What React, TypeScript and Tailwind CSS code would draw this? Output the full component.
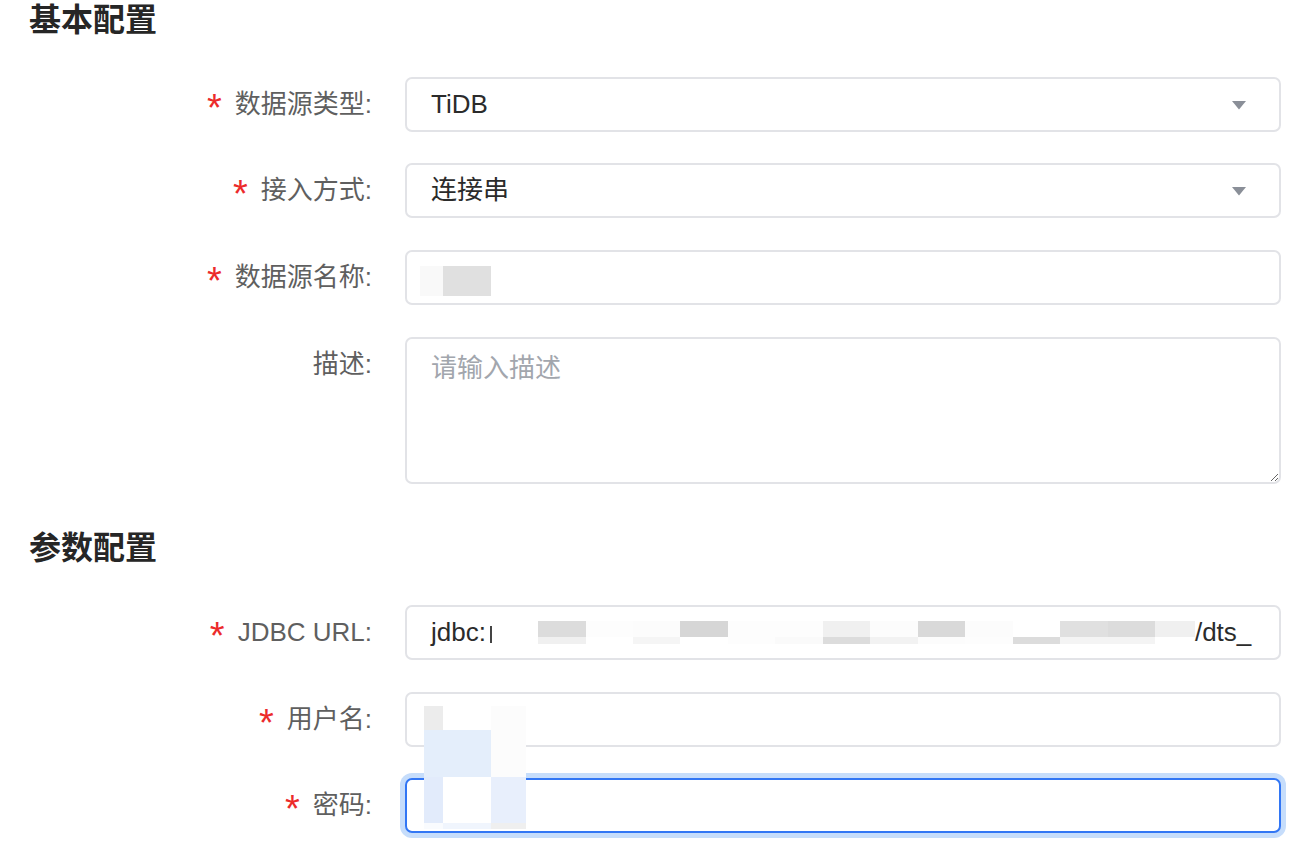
const FONT = "font-['Liberation_Sans','Noto_Sans_CJK_SC',sans-serif]"

function Label({ text, required }: { text: string; required?: boolean }) {
  return (
    <div className="flex h-[55px] w-[405px] shrink-0 items-center justify-end pr-[33px] text-[26px] text-[#5f5f5f]">
      {required && (
        <span className="mr-[13px] inline-block translate-y-[3px] text-[38px] leading-none text-[#ec2b2b]">*</span>
      )}
      <span>{text}:</span>
    </div>
  )
}

function Caret() {
  return (
    <svg width="16" height="10" viewBox="0 0 16 10" className="shrink-0">
      <path d="M1 1 H15 L8 9.5 Z" fill="#8a8f98" />
    </svg>
  )
}

function Box({
  children,
  focused,
  className = '',
}: {
  children?: React.ReactNode
  focused?: boolean
  className?: string
}) {
  return (
    <div
      className={
        'flex h-[55px] w-[876px] items-center overflow-hidden rounded-[7px] border-2 bg-white ' +
        (focused ? 'border-[#3276f4] shadow-[0_0_0_5px_#c6ddfb] ' : 'border-[#e2e3e7] ') +
        className
      }
    >
      {children}
    </div>
  )
}

function SelectBox({ value }: { value: string }) {
  return (
    <Box className="justify-between pl-[24px] pr-[32px]">
      <span className="text-[26px] text-[#2b2b2b]">{value}</span>
      <Caret />
    </Box>
  )
}

// pixelated cells covering the url: [width, top colour, bottom colour]
const urlCells: [number, string, string][] = [
  [45, '#ffffff', '#ffffff'],
  [48, '#dcdcdc', '#f0f0f0'],
  [47, '#fdfdfd', '#ffffff'],
  [47, '#fcfcfc', '#f5f5f5'],
  [48, '#d6d6d6', '#ffffff'],
  [47, '#fdfdfd', '#fdfdfd'],
  [48, '#fdfdfd', '#fafafa'],
  [47, '#f0f0f0', '#dcdcdc'],
  [48, '#fcfcfc', '#f2f2f2'],
  [47, '#d9d9d9', '#fcfcfc'],
  [48, '#fcfcfc', '#fdfdfd'],
  [47, '#ffffff', '#dcdcdc'],
  [48, '#e0e0e0', '#f4f4f4'],
  [47, '#dcdcdc', '#f4f4f4'],
  [40, '#f0f0f0', '#ffffff'],
]

const accountCols = ['w-[19px]', 'w-[48px]', 'w-[35px]']
const accountRows: { h: string; colors: string[] }[] = [
  { h: 'h-[24px]', colors: ['bg-[#ececec]', 'bg-transparent', 'bg-[#fcfcfc]'] },
  { h: 'h-[47px]', colors: ['bg-[#e4eefb]', 'bg-[#e4eefb]', 'bg-[#fcfcfc]'] },
  { h: 'h-[46px]', colors: ['bg-[#e2ebfb]', 'bg-[#ffffff]', 'bg-[#e8effc]'] },
  { h: 'h-[6px]', colors: ['bg-[#f9fbfe]', 'bg-[#f0f5fd]', 'bg-[#efefef]'] },
]

export default function App() {
  return (
    <div className={`h-[852px] w-[1308px] overflow-hidden bg-white ${FONT}`}>
      <h2 className="pl-[29px] text-[32px] leading-[40px] font-semibold text-[#262626]">基本配置</h2>

      <div className="mt-[37px] flex">
        <Label text="数据源类型" required />
        <SelectBox value="TiDB" />
      </div>

      <div className="mt-[31px] flex">
        <Label text="接入方式" required />
        <SelectBox value="连接串" />
      </div>

      <div className="mt-[32px] flex">
        <Label text="数据源名称" required />
        <Box className="items-start pt-[14px] pl-[13px]">
          <div className="h-[30px] w-[23px] bg-[#f9f9f9]" />
          <div className="h-[30px] w-[48px] bg-[#e0e0e0]" />
        </Box>
      </div>

      <div className="mt-[32px] flex">
        <Label text="描述" />
        <textarea
          placeholder="请输入描述"
          className="h-[147px] w-[876px] rounded-[7px] border-2 border-[#e2e3e7] bg-white px-[24px] pt-[11px] text-[26px] leading-[36px] text-[#2b2b2b] outline-none placeholder:text-[#a2a6ad]"
        />
      </div>

      <h2 className="mt-[44px] pl-[29px] text-[32px] leading-[40px] font-semibold text-[#262626]">参数配置</h2>

      <div className="mt-[37px] flex">
        <Label text="JDBC URL" required />
        <Box className="pl-[24px]">
          <span className="text-[26px] text-[#2b2b2b]">jdbc:</span>
          <span className="ml-[4px] h-[17px] w-[2px] translate-y-[2px] bg-[#444]" />
          <div className="ml-[1px] flex shrink-0">
            {urlCells.map(([w, top, bottom], i) => (
              <div key={i} className="flex flex-col" style={{ width: w }}>
                <div className="h-[16px]" style={{ background: top }} />
                <div className="h-[7px]" style={{ background: bottom }} />
              </div>
            ))}
          </div>
          <span className="shrink-0 text-[26px] text-[#2b2b2b]">/dts_</span>
        </Box>
      </div>

      <div className="relative">
        <div className="mt-[32px] flex">
          <Label text="用户名" required />
          <Box />
        </div>

        <div className="mt-[31px] flex">
          <Label text="密码" required />
          <Box focused />
        </div>

        {/* pixelated overlay across both fields */}
        <div className="absolute top-[14px] left-[424px] flex flex-col">
          {accountRows.map((r, i) => (
            <div key={i} className={`flex ${r.h}`}>
              {r.colors.map((c, j) => (
                <div key={j} className={`${accountCols[j]} ${c}`} />
              ))}
            </div>
          ))}
        </div>
      </div>
    </div>
  )
}
